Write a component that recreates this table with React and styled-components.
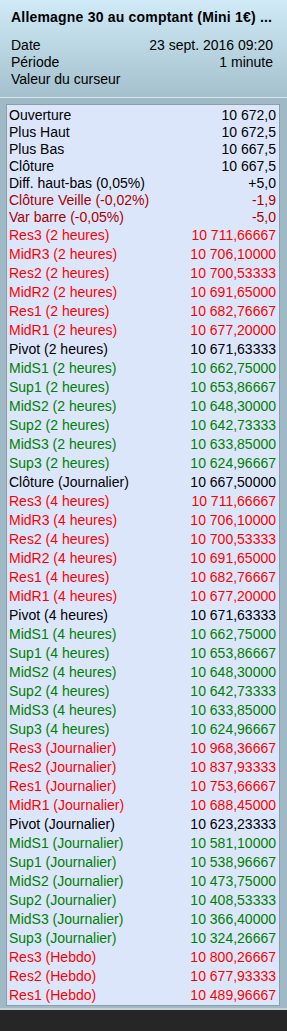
import React from 'react';
import styled, { createGlobalStyle } from 'styled-components';

const GlobalStyle = createGlobalStyle`
  body {
    margin: 0;
    background: #262626;
    font-family: "Liberation Sans", Arial, sans-serif;
  }
`;

const Window = styled.div`
  width: 287px;
  background: #9fbac6;
  border-bottom: 2px solid #c9d1d5;
  box-sizing: border-box;
`;

const Header = styled.div`
  padding: 9px 14px 9px 11px;
  background: linear-gradient(to bottom, #d0eaf7 0%, #bcd8e4 45%, #a4c0cc 100%);
  border-bottom: 1px solid #d8e7ee;
  color: #000;
`;

const Title = styled.div`
  font-size: 14px;
  font-weight: bold;
  line-height: 16px;
  letter-spacing: 0.2px;
  white-space: nowrap;
  margin-bottom: 12px;
`;

const InfoLine = styled.div`
  display: flex;
  justify-content: space-between;
  font-size: 14px;
  line-height: 17px;
`;

const Body = styled.div`
  padding: 6px 7px 2px 6px;
`;

const Panel = styled.div`
  background: #dce6fb;
  border: 1px solid #8c9ea8;
  padding: 2px 3px 0 2px;
`;

const Row = styled.div`
  display: flex;
  justify-content: space-between;
  font-size: 14px;
  height: ${({ $tall }) => ($tall ? '19px' : '17px')};
  line-height: ${({ $tall }) => ($tall ? '19px' : '17px')};
  color: ${({ $tone }) =>
    $tone === 'red' ? '#ff0000' : $tone === 'dark' ? '#a80000' : $tone === 'green' ? '#008000' : '#000'};
  white-space: nowrap;
`;

const summary = [
  ['Ouverture', '10 672,0'],
  ['Plus Haut', '10 672,5'],
  ['Plus Bas', '10 667,5'],
  ['Clôture', '10 667,5'],
  ['Diff. haut-bas (0,05%)', '+5,0'],
  ['Clôture Veille (-0,02%)', '-1,9', 'dark'],
  ['Var barre (-0,05%)', '-5,0', 'dark'],
];

const levels = [
  ['Res3 (2 heures)', '10 711,66667', 'red'],
  ['MidR3 (2 heures)', '10 706,10000', 'red'],
  ['Res2 (2 heures)', '10 700,53333', 'red'],
  ['MidR2 (2 heures)', '10 691,65000', 'red'],
  ['Res1 (2 heures)', '10 682,76667', 'red'],
  ['MidR1 (2 heures)', '10 677,20000', 'red'],
  ['Pivot (2 heures)', '10 671,63333'],
  ['MidS1 (2 heures)', '10 662,75000', 'green'],
  ['Sup1 (2 heures)', '10 653,86667', 'green'],
  ['MidS2 (2 heures)', '10 648,30000', 'green'],
  ['Sup2 (2 heures)', '10 642,73333', 'green'],
  ['MidS3 (2 heures)', '10 633,85000', 'green'],
  ['Sup3 (2 heures)', '10 624,96667', 'green'],
  ['Clôture (Journalier)', '10 667,50000'],
  ['Res3 (4 heures)', '10 711,66667', 'red'],
  ['MidR3 (4 heures)', '10 706,10000', 'red'],
  ['Res2 (4 heures)', '10 700,53333', 'red'],
  ['MidR2 (4 heures)', '10 691,65000', 'red'],
  ['Res1 (4 heures)', '10 682,76667', 'red'],
  ['MidR1 (4 heures)', '10 677,20000', 'red'],
  ['Pivot (4 heures)', '10 671,63333'],
  ['MidS1 (4 heures)', '10 662,75000', 'green'],
  ['Sup1 (4 heures)', '10 653,86667', 'green'],
  ['MidS2 (4 heures)', '10 648,30000', 'green'],
  ['Sup2 (4 heures)', '10 642,73333', 'green'],
  ['MidS3 (4 heures)', '10 633,85000', 'green'],
  ['Sup3 (4 heures)', '10 624,96667', 'green'],
  ['Res3 (Journalier)', '10 968,36667', 'red'],
  ['Res2 (Journalier)', '10 837,93333', 'red'],
  ['Res1 (Journalier)', '10 753,66667', 'red'],
  ['MidR1 (Journalier)', '10 688,45000', 'red'],
  ['Pivot (Journalier)', '10 623,23333'],
  ['MidS1 (Journalier)', '10 581,10000', 'green'],
  ['Sup1 (Journalier)', '10 538,96667', 'green'],
  ['MidS2 (Journalier)', '10 473,75000', 'green'],
  ['Sup2 (Journalier)', '10 408,53333', 'green'],
  ['MidS3 (Journalier)', '10 366,40000', 'green'],
  ['Sup3 (Journalier)', '10 324,26667', 'green'],
  ['Res3 (Hebdo)', '10 800,26667', 'red'],
  ['Res2 (Hebdo)', '10 677,93333', 'red'],
  ['Res1 (Hebdo)', '10 489,96667', 'red'],
];

export default function App() {
  return (
    <>
      <GlobalStyle />
      <Window>
        <Header>
          <Title>Allemagne 30 au comptant (Mini 1€) ...</Title>
          <InfoLine>
            <span>Date</span>
            <span>23 sept. 2016 09:20</span>
          </InfoLine>
          <InfoLine>
            <span>Période</span>
            <span>1 minute</span>
          </InfoLine>
          <InfoLine>
            <span>Valeur du curseur</span>
          </InfoLine>
        </Header>
        <Body>
          <Panel>
            {summary.map(([label, value, tone]) => (
              <Row key={label} $tone={tone}>
                <span>{label}</span>
                <span>{value}</span>
              </Row>
            ))}
            {levels.map(([label, value, tone]) => (
              <Row key={label} $tone={tone} $tall>
                <span>{label}</span>
                <span>{value}</span>
              </Row>
            ))}
          </Panel>
        </Body>
      </Window>
    </>
  );
}
